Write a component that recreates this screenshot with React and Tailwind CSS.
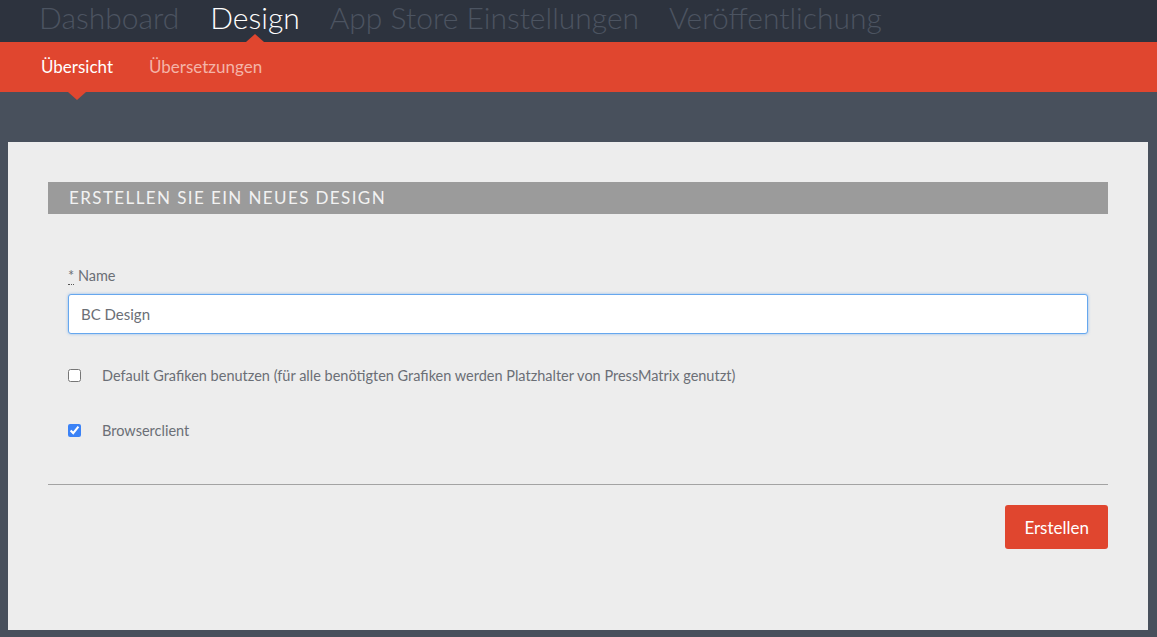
import React, { useState } from 'react';

const font = { fontFamily: 'Lato, "Open Sans", sans-serif' };

function TopNav() {
  const items = ['Dashboard', 'Design', 'App Store Einstellungen', 'Veröffentlichung'];
  return (
    <div className="h-[42px] bg-[#2d333e] flex items-end pl-[39px] gap-[30px] overflow-hidden">
      {items.map((item) => (
        <div key={item} className="relative h-full flex items-start">
          <span
            className={`text-[30px] font-light leading-none mt-[2px] whitespace-nowrap ${
              item === 'Design' ? 'text-white ml-[1px]' : 'text-[#4c5461]'
            }`}
          >
            {item}
          </span>
          {item === 'Design' && (
            <span className="absolute bottom-0 left-1/2 -translate-x-1/2 w-0 h-0 border-x-[9px] border-x-transparent border-b-[8px] border-b-[#e0462f]" />
          )}
        </div>
      ))}
    </div>
  );
}

function SubNav() {
  return (
    <div className="h-[50px] bg-[#e0462f] flex items-center pl-[41px] gap-[36px] text-[17px]">
      <div className="relative h-full flex items-center">
        <span className="text-white">Übersicht</span>
        <span className="absolute -bottom-[8px] left-1/2 -translate-x-1/2 w-0 h-0 border-x-[9px] border-x-transparent border-t-[8px] border-t-[#e0462f]" />
      </div>
      <span className="text-[#f4b4a8]">Übersetzungen</span>
    </div>
  );
}

export default function App() {
  const [name, setName] = useState('BC Design');
  const [defaults, setDefaults] = useState(false);
  const [browser, setBrowser] = useState(true);

  return (
    <div className="min-h-screen bg-[#48505c]" style={font}>
      <TopNav />
      <SubNav />
      <div className="pt-[50px] pl-[8px] pr-[9px] pb-[7px]">
        <div className="bg-[#ededed] px-[40px] pt-[40px] pb-[81px]">
          {/* Header */}
          <div className="h-[32px] bg-[#9b9b9b] flex items-center px-[21px]">
            <h2 className="text-[17px] tracking-[1.4px] text-[#f2f2f2] uppercase">
              Erstellen sie ein neues Design
            </h2>
          </div>

          {/* Form */}
          <div className="px-[20px] pt-[51px]">
            <label className="block text-[14.5px] text-[#6b6f76] mb-[7px]">
              <abbr title="required" className="no-underline border-b border-dotted border-[#555]">*</abbr> Name
            </label>
            <input
              value={name}
              onChange={(e) => setName(e.target.value)}
              className="w-full h-[40px] px-[12px] bg-white border border-[#66a7ee] rounded-[3px] shadow-[0_0_3px_rgba(102,167,238,0.7)] text-[15px] text-[#6b6f76] outline-none"
            />

            <label className="flex items-center mt-[31px] text-[14.5px] text-[#6b6f76]">
              <input
                type="checkbox"
                checked={defaults}
                onChange={(e) => setDefaults(e.target.checked)}
                className="w-[13px] h-[13px] m-0 accent-[#3b82f6]"
              />
              <span className="ml-[21px]">
                Default Grafiken benutzen (für alle benötigten Grafiken werden Platzhalter von PressMatrix genutzt)
              </span>
            </label>

            <label className="flex items-center mt-[33px] text-[14.5px] text-[#6b6f76]">
              <input
                type="checkbox"
                checked={browser}
                onChange={(e) => setBrowser(e.target.checked)}
                className="w-[13px] h-[13px] m-0 accent-[#3b82f6]"
              />
              <span className="ml-[21px]">Browserclient</span>
            </label>
          </div>

          <hr className="mt-[43px] border-0 border-t border-[#a3a3a3]" />

          <div className="flex justify-end mt-[20px]">
            <button className="h-[44px] px-[19px] bg-[#e0462f] text-white text-[17px] rounded-[3px]">
              Erstellen
            </button>
          </div>
        </div>
      </div>
    </div>
  );
}
